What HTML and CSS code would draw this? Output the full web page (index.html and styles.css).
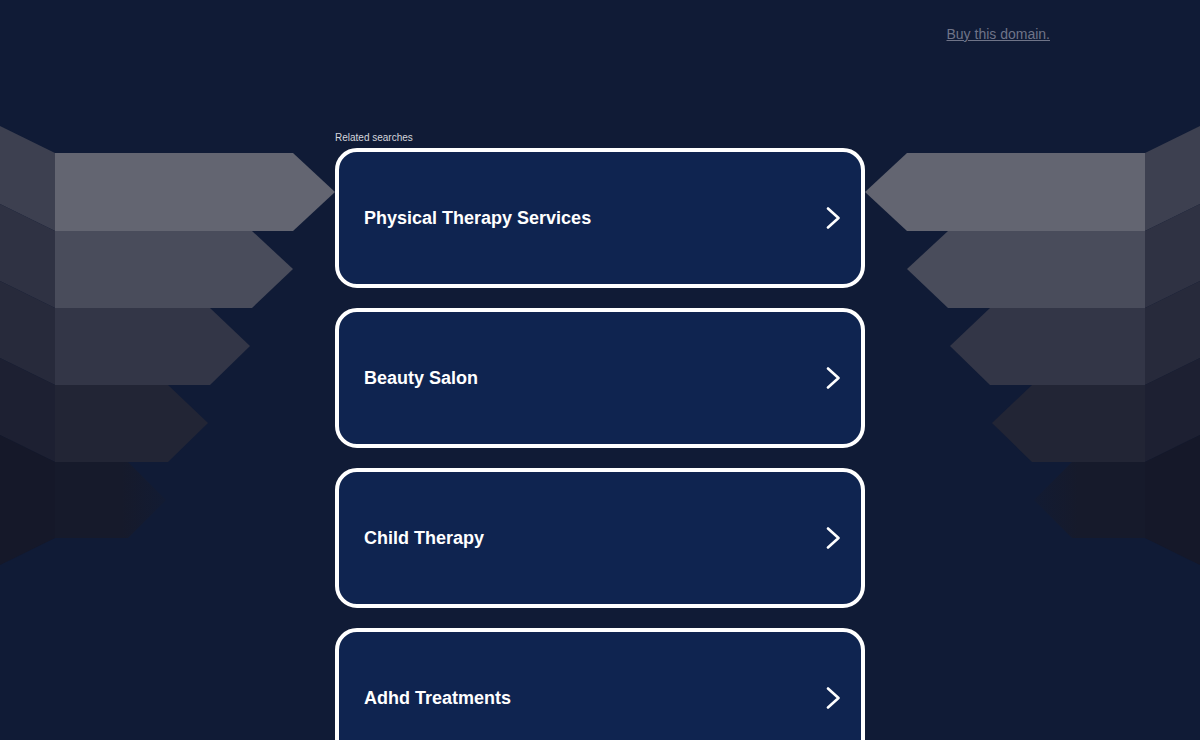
FILE: index.html
```html
<!DOCTYPE html>
<html>
<head>
<meta charset="utf-8">
<title>Related searches</title>
<link rel="stylesheet" href="styles.css">
</head>
<body>
<svg class="backdrop" width="1200" height="740" viewBox="0 0 1200 740" aria-hidden="true">
  <defs>
    <linearGradient id="fadeL" x1="0" y1="0" x2="1" y2="0">
      <stop offset="0" stop-color="#161a2b"/>
      <stop offset="0.6" stop-color="#161a2b"/>
      <stop offset="1" stop-color="#121b33"/>
    </linearGradient>
    <g id="wing">
      <polygon points="0,126 55,153 55,231 0,204" fill="#3d4050"/>
      <polygon points="0,204 55,231 55,308 0,281" fill="#2f3243"/>
      <polygon points="0,281 55,308 55,385 0,358" fill="#272a3b"/>
      <polygon points="0,358 55,385 55,462 0,435" fill="#1d2032"/>
      <polygon points="0,435 55,462 55,538 0,565" fill="#151829"/>
      <polygon points="55,153 293,153 335,192 293,231 55,231" fill="#636571"/>
      <polygon points="55,231 252,231 293,269 252,308 55,308" fill="#494c5b"/>
      <polygon points="55,308 210,308 250,346 210,385 55,385" fill="#333647"/>
      <polygon points="55,385 168,385 208,423 168,462 55,462" fill="#222535"/>
      <polygon points="55,462 128,462 166,500 128,538 55,538" fill="url(#fadeL)"/>
    </g>
  </defs>
  <use href="#wing"/>
  <use href="#wing" transform="translate(1200,0) scale(-1,1)"/>
</svg>

<div class="page">
  <header class="top">
    <a class="buy" href="#">Buy this domain.</a>
  </header>

  <main class="list">
    <div class="label">Related searches</div>
    <a class="card" href="#"><span class="card-text">Physical Therapy Services</span>
      <svg class="chev" width="16" height="22" viewBox="0 0 16 22"><polyline points="3,1.5 13.5,11 3,20.5" fill="none" stroke="#fff" stroke-width="2.6" stroke-linecap="round" stroke-linejoin="round"/></svg>
    </a>
    <a class="card" href="#"><span class="card-text">Beauty Salon</span>
      <svg class="chev" width="16" height="22" viewBox="0 0 16 22"><polyline points="3,1.5 13.5,11 3,20.5" fill="none" stroke="#fff" stroke-width="2.6" stroke-linecap="round" stroke-linejoin="round"/></svg>
    </a>
    <a class="card" href="#"><span class="card-text">Child Therapy</span>
      <svg class="chev" width="16" height="22" viewBox="0 0 16 22"><polyline points="3,1.5 13.5,11 3,20.5" fill="none" stroke="#fff" stroke-width="2.6" stroke-linecap="round" stroke-linejoin="round"/></svg>
    </a>
    <a class="card" href="#"><span class="card-text">Adhd Treatments</span>
      <svg class="chev" width="16" height="22" viewBox="0 0 16 22"><polyline points="3,1.5 13.5,11 3,20.5" fill="none" stroke="#fff" stroke-width="2.6" stroke-linecap="round" stroke-linejoin="round"/></svg>
    </a>
  </main>
</div>
</body>
</html>
```

FILE: styles.css
```css
html, body {
  margin: 0;
  padding: 0;
}

body {
  background: #101b36;
  font-family: "Liberation Sans", Arial, sans-serif;
  width: 1200px;
  height: 740px;
  overflow: hidden;
  position: relative;
}

.backdrop {
  position: absolute;
  top: 0;
  left: 0;
  z-index: 0;
  display: block;
}

.page {
  position: relative;
  z-index: 1;
}

.top {
  display: flex;
  justify-content: flex-end;
  padding: 26px 150px 0 0;
  height: 16px;
}

.buy {
  font-size: 14px;
  line-height: 16px;
  color: #6f7488;
  text-decoration: underline;
}

.list {
  width: 530px;
  margin: 90px auto 0;
  display: flex;
  flex-direction: column;
  gap: 20px;
}

.label {
  font-size: 10px;
  line-height: 12px;
  color: #d4d6dc;
  margin-bottom: -16px;
  height: 12px;
}

.card {
  box-sizing: border-box;
  height: 140px;
  border: 4px solid #ffffff;
  border-radius: 22px;
  background: #0f2450;
  display: flex;
  align-items: center;
  justify-content: space-between;
  padding: 0 20px 0 25px;
  text-decoration: none;
}

.card-text {
  color: #ffffff;
  font-size: 18px;
  font-weight: bold;
}

.chev {
  display: block;
}
```
